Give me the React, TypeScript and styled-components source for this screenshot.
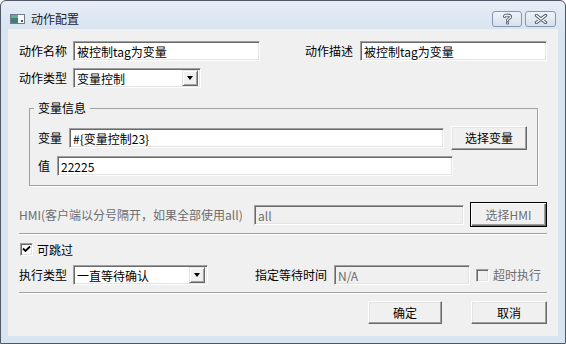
import styled, { createGlobalStyle } from 'styled-components';

const GlobalStyle = createGlobalStyle`
  html, body {
    margin: 0;
    padding: 0;
    background: #ffffff;
  }
  body {
    font-family: "Noto Sans CJK SC", "Noto Sans", sans-serif;
    font-size: 12px;
    line-height: 14px;
    color: #000000;
  }
`;

const Window = styled.div`
  width: 566px;
  height: 344px;
  box-sizing: border-box;
  border: 1px solid #4f5864;
  border-radius: 6px 6px 0 0;
  background: linear-gradient(#e6edf6 0, #d9e4f1 28px, #d9e4f1 100%);
  display: flex;
  flex-direction: column;
  overflow: hidden;
`;

const TitleBar = styled.div`
  height: 28px;
  box-sizing: border-box;
  padding: 7px 9px 0 9px;
  display: flex;
  align-items: center;
`;

const Title = styled.span`
  margin-left: 6px;
  color: #1e1e1e;
  flex: 1;
`;

const CaptionGroup = styled.div`
  display: flex;
  gap: 3px;
`;

const CaptionButton = styled.div<{ $w: number }>`
  width: ${(p) => p.$w}px;
  height: 16px;
  box-sizing: border-box;
  border: 1px solid #8797ad;
  border-radius: 3px;
  background: linear-gradient(#eef3f9, #d6e1ee);
  display: flex;
  align-items: center;
  justify-content: center;
`;

const Client = styled.div`
  flex: 1;
  margin: 0 7px 7px 7px;
  background: #f0f0f0;
  padding: 12px 11px 0 11px;
  display: flex;
  flex-direction: column;
`;

const Row = styled.div<{ $top?: number; $h?: number }>`
  display: flex;
  align-items: center;
  height: ${(p) => p.$h ?? 20}px;
  margin-top: ${(p) => p.$top ?? 0}px;
`;

const SplitRow = styled(Row)`
  justify-content: space-between;
`;

const Field = styled.div<{ $gap?: number; $left?: number }>`
  display: flex;
  align-items: center;
  gap: ${(p) => p.$gap ?? 6}px;
  margin-left: ${(p) => p.$left ?? 0}px;
`;

const Label = styled.span<{ $disabled?: boolean }>`
  white-space: nowrap;
  color: ${(p) => (p.$disabled ? '#6d6d6d' : '#000000')};
`;

const TextBox = styled.div<{ $w: number; $disabled?: boolean }>`
  width: ${(p) => p.$w}px;
  height: 20px;
  box-sizing: border-box;
  border: 1px solid;
  border-color: #a0a0a0 #ffffff #ffffff #a0a0a0;
  box-shadow: inset 1px 1px 0 #696969, inset -1px -1px 0 #e3e3e3;
  background: ${(p) => (p.$disabled ? '#f0f0f0' : '#ffffff')};
  color: ${(p) => (p.$disabled ? '#6d6d6d' : '#000000')};
  padding: 2px 2px 0 3px;
  display: flex;
  align-items: center;
  white-space: nowrap;
  overflow: hidden;
`;

const ComboText = styled.span`
  flex: 1;
`;

const DropButton = styled.div`
  width: 16px;
  height: 16px;
  box-sizing: border-box;
  margin-right: 0;
  margin-top: -2px;
  border: 1px solid;
  border-color: #e3e3e3 #696969 #696969 #e3e3e3;
  box-shadow: inset 1px 1px 0 #ffffff, inset -1px -1px 0 #a0a0a0;
  background: #f0f0f0;
  display: flex;
  align-items: center;
  justify-content: center;
  &::after {
    content: '';
    border-left: 3.5px solid transparent;
    border-right: 3.5px solid transparent;
    border-top: 4px solid #000000;
  }
`;

const Button = styled.div<{ $w: number; $h?: number; $default?: boolean; $disabled?: boolean }>`
  width: ${(p) => p.$w}px;
  height: ${(p) => p.$h ?? 23}px;
  box-sizing: border-box;
  border: 1px solid;
  border-color: ${(p) => (p.$default ? '#000000' : '#ffffff #696969 #696969 #ffffff')};
  box-shadow: ${(p) =>
    p.$default
      ? 'inset 1px 1px 0 #ffffff, inset -1px -1px 0 #696969, inset -2px -2px 0 #a0a0a0'
      : 'inset -1px -1px 0 #a0a0a0, inset 1px 1px 0 #e3e3e3'};
  background: #f0f0f0;
  color: ${(p) => (p.$disabled ? '#6d6d6d' : '#000000')};
  text-shadow: ${(p) => (p.$disabled ? '1px 1px 0 #ffffff' : 'none')};
  display: flex;
  align-items: center;
  justify-content: center;
`;

const GroupBox = styled.fieldset`
  margin: 13px 9px 0 10px;
  padding: 11px 8px 9px 8px;
  border: 1px solid #a0a0a0;
  box-shadow: 1px 1px 0 #ffffff;
  min-width: 0;
`;

const Legend = styled.legend`
  padding: 0 4px;
  margin-left: -4px;
  line-height: 14px;
`;

const Separator = styled.div<{ $top: number }>`
  margin-top: ${(p) => p.$top}px;
  height: 0;
  border-top: 1px solid #a0a0a0;
  border-bottom: 1px solid #ffffff;
`;

const CheckBox = styled.div<{ $disabled?: boolean }>`
  width: 13px;
  height: 13px;
  box-sizing: border-box;
  border: 1px solid;
  border-color: #a0a0a0 #ffffff #ffffff #a0a0a0;
  box-shadow: inset 1px 1px 0 #696969, inset -1px -1px 0 #e3e3e3;
  background: ${(p) => (p.$disabled ? '#f0f0f0' : '#ffffff')};
  display: flex;
  align-items: center;
  justify-content: center;
`;

const CheckField = styled.div<{ $left?: number; $gap?: number }>`
  display: flex;
  align-items: center;
  gap: ${(p) => p.$gap ?? 4}px;
  margin-left: ${(p) => p.$left ?? 0}px;
`;

const ButtonRow = styled(Row)`
  justify-content: flex-end;
  gap: 29px;
`;

const WindowIcon = () => (
  <svg width="15" height="10" viewBox="0 0 15 10">
    <rect x="0.5" y="0.5" width="14" height="9" fill="#ffffff" stroke="#707c8c" />
    <rect x="1" y="1" width="7" height="8" fill="#3f7f78" />
    <rect x="1" y="1" width="7" height="3" fill="#6aa89c" />
    <rect x="11" y="6" width="2" height="2" fill="#4a5560" />
  </svg>
);

const HelpGlyph = () => (
  <svg width="11" height="12" viewBox="0 0 11 12">
    <path
      d="M2.5 3.5 C2.5 1.5 8.5 1.5 8.5 3.8 C8.5 5.6 5.5 5.6 5.5 7.5"
      fill="none"
      stroke="#4d5b6e"
      strokeWidth="3"
      strokeLinecap="round"
    />
    <path
      d="M2.5 3.5 C2.5 1.5 8.5 1.5 8.5 3.8 C8.5 5.6 5.5 5.6 5.5 7.5"
      fill="none"
      stroke="#ffffff"
      strokeWidth="1.2"
      strokeLinecap="round"
    />
    <circle cx="5.5" cy="10" r="1.6" fill="#4d5b6e" />
    <circle cx="5.5" cy="10" r="0.7" fill="#ffffff" />
  </svg>
);

const CloseGlyph = () => (
  <svg width="14" height="10" viewBox="0 0 14 10">
    <path d="M2.5 1.5 L11.5 8.5 M11.5 1.5 L2.5 8.5" stroke="#4d5b6e" strokeWidth="3.4" strokeLinecap="round" />
    <path d="M2.5 1.5 L11.5 8.5 M11.5 1.5 L2.5 8.5" stroke="#ffffff" strokeWidth="1.4" strokeLinecap="round" />
  </svg>
);

const CheckMark = () => (
  <svg width="9" height="9" viewBox="0 0 9 9">
    <path d="M1 3.5 L3.5 6 L8 1.5" fill="none" stroke="#000000" strokeWidth="1.8" />
  </svg>
);

const Combo = ({ w, text }: { w: number; text: string }) => (
  <TextBox $w={w}>
    <ComboText>{text}</ComboText>
    <DropButton />
  </TextBox>
);

export default function App() {
  return (
    <>
      <GlobalStyle />
      <Window>
        <TitleBar>
          <WindowIcon />
          <Title>动作配置</Title>
          <CaptionGroup>
            <CaptionButton $w={30}>
              <HelpGlyph />
            </CaptionButton>
            <CaptionButton $w={31}>
              <CloseGlyph />
            </CaptionButton>
          </CaptionGroup>
        </TitleBar>
        <Client>
          <SplitRow>
            <Field>
              <Label>动作名称</Label>
              <TextBox $w={187}>被控制tag为变量</TextBox>
            </Field>
            <Field $gap={7}>
              <Label>动作描述</Label>
              <TextBox $w={187}>被控制tag为变量</TextBox>
            </Field>
          </SplitRow>
          <Row $top={7}>
            <Field>
              <Label>动作类型</Label>
              <Combo w={128} text="变量控制" />
            </Field>
          </Row>

          <GroupBox>
            <Legend>变量信息</Legend>
            <Row $h={24}>
              <Field $gap={7}>
                <Label>变量</Label>
                <TextBox $w={375}>#{'{'}变量控制23{'}'}</TextBox>
              </Field>
              <Button $w={76} $h={24} style={{ marginLeft: 7 }}>
                选择变量
              </Button>
            </Row>
            <Row $top={6}>
              <Field $gap={7}>
                <Label>值</Label>
                <TextBox $w={396}>22225</TextBox>
              </Field>
            </Row>
          </GroupBox>

          <SplitRow $top={16} $h={25}>
            <Label $disabled>HMI(客户端以分号隔开，如果全部使用all)</Label>
            <Field $gap={6}>
              <TextBox $w={210} $disabled>
                all
              </TextBox>
              <Button $w={77} $h={25} $default $disabled>
                选择HMI
              </Button>
            </Field>
          </SplitRow>

          <Separator $top={6} />

          <Row $top={8} $h={13}>
            <CheckField $left={1}>
              <CheckBox>
                <CheckMark />
              </CheckBox>
              <Label>可跳过</Label>
            </CheckField>
          </Row>

          <Row $top={9}>
            <Field>
              <Label>执行类型</Label>
              <Combo w={135} text="一直等待确认" />
            </Field>
            <Field $gap={7} $left={47}>
              <Label>指定等待时间</Label>
              <TextBox $w={136} $disabled>
                N/A
              </TextBox>
            </Field>
            <CheckField $left={6} $gap={4}>
              <CheckBox $disabled />
              <Label $disabled>超时执行</Label>
            </CheckField>
          </Row>

          <Separator $top={7} />

          <ButtonRow $top={7} $h={23}>
            <Button $w={74}>确定</Button>
            <Button $w={76}>取消</Button>
          </ButtonRow>
        </Client>
      </Window>
    </>
  );
}
